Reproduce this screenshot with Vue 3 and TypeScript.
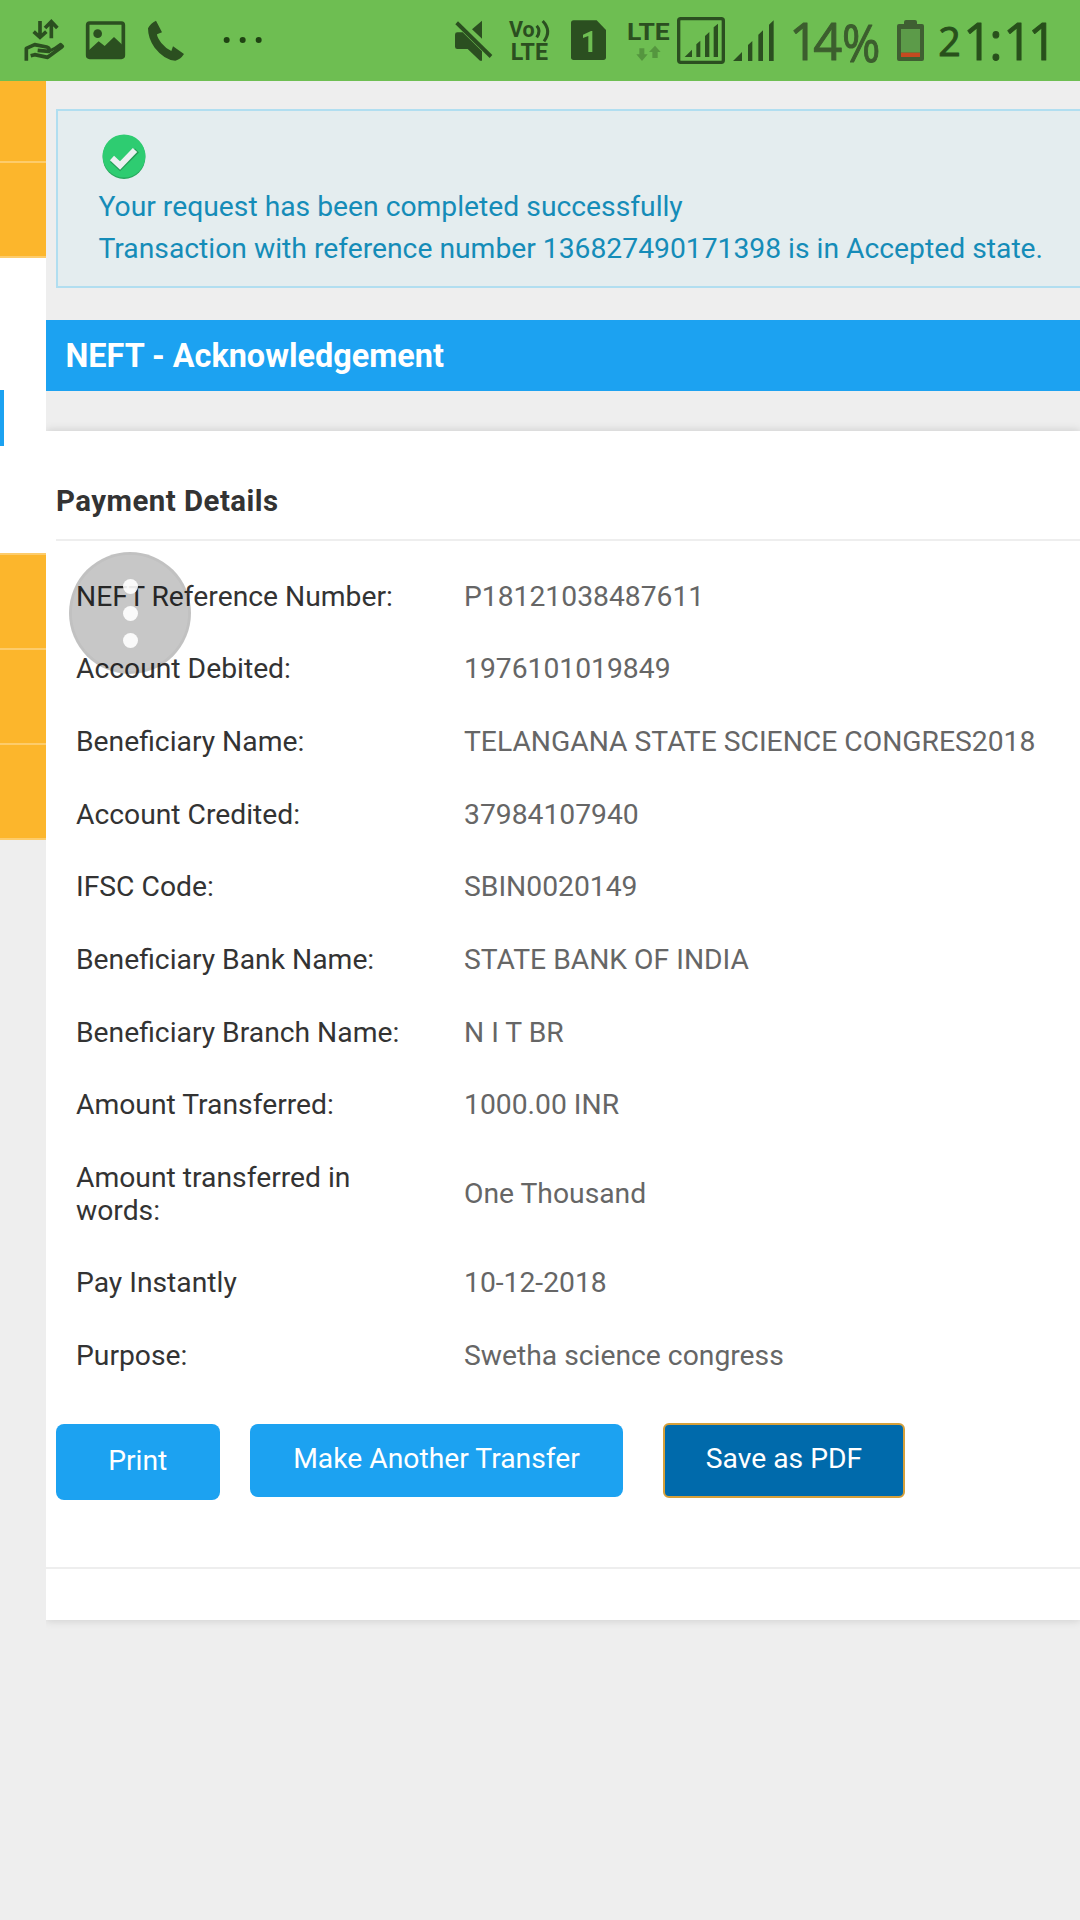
<script setup lang="ts">
interface Detail {
  label: string
  value: string
}

const details: Detail[] = [
  { label: 'NEFT Reference Number:', value: 'P18121038487611' },
  { label: 'Account Debited:', value: '1976101019849' },
  { label: 'Beneficiary Name:', value: 'TELANGANA STATE SCIENCE CONGRES2018' },
  { label: 'Account Credited:', value: '37984107940' },
  { label: 'IFSC Code:', value: 'SBIN0020149' },
  { label: 'Beneficiary Bank Name:', value: 'STATE BANK OF INDIA' },
  { label: 'Beneficiary Branch Name:', value: 'N I T BR' },
  { label: 'Amount Transferred:', value: '1000.00 INR' },
  { label: 'Amount transferred in words:', value: 'One Thousand' },
  { label: 'Pay Instantly', value: '10-12-2018' },
  { label: 'Purpose:', value: 'Swetha science congress' },
]
</script>

<template>
  <div class="screen">
    <header class="status">
      <!-- data sharing hand -->
      <svg width="75" height="81" viewBox="0 0 225 243">
        <g fill="none" stroke="#2b4f20" stroke-width="11">
          <path d="M120 63V110M101 95L120 112L139 95" />
          <path d="M154 115V66M135 84L154 65L172 84" />
          <path d="M79 182V145L104 134L140 141Q151 144 146 154L113 151" stroke-linejoin="round" />
          <path d="M92 167L104 164L143 172L186 140" stroke-linejoin="round" />
          <path d="M148 153L163 146L182 133L188 139" stroke-width="9" stroke-linecap="round" stroke-linejoin="round" />
        </g>
      </svg>
      <!-- picture -->
      <svg width="61" height="81" viewBox="225 0 183 243">
        <rect x="263" y="69" width="107" height="103" rx="6" fill="none" stroke="#2b4f20" stroke-width="11" />
        <circle cx="293" cy="101" r="13" fill="#2b4f20" />
        <path d="M264 153L296 124L314 138L342 111L370 137V172H264Z" fill="#2b4f20" />
      </svg>
      <!-- phone -->
      <svg width="64" height="81" viewBox="408 0 192 243">
        <path d="M468 62L486 97L471 103Q471 112 484 129Q498 146 514 153L519 139L552 162Q541 179 526 182Q493 180 464 143Q444 116 444 85Q451 70 468 62Z" fill="#2b4f20" />
      </svg>
      <!-- more notifications -->
      <svg width="240" height="81" viewBox="600 0 720 243">
        <g fill="#1f4312">
          <circle cx="680" cy="120" r="9" />
          <circle cx="728" cy="120" r="9" />
          <circle cx="776" cy="120" r="9" />
        </g>
      </svg>
      <!-- muted -->
      <svg width="60" height="81" viewBox="30 0 180 243">
        <g fill="#2b4f20">
          <path d="M126 88L156 62V116Z" />
          <path d="M82 97H98L156 154V182H150L113 147H82Q75 147 75 140V104Q75 97 82 97Z" />
          <path d="M84 64L187 165L179 174L76 73Z" />
        </g>
      </svg>
      <!-- VoLTE -->
      <svg width="60" height="81" viewBox="210 0 180 243">
        <g class="glyph" font-size="66">
          <text x="237" y="112" textLength="77" lengthAdjust="spacingAndGlyphs">Vo</text>
          <text x="242" y="180" font-size="70" textLength="112" lengthAdjust="spacingAndGlyphs">LTE</text>
        </g>
        <path d="M320 77Q334 92 320 112M338 63Q366 92 342 124" fill="none" stroke="#2b4f20" stroke-width="9" />
      </svg>
      <!-- SIM 1 -->
      <svg width="56" height="81" viewBox="390 0 168 243">
        <path d="M431 61H500L528 90V172Q528 180 520 180H431Q423 180 423 172V69Q423 61 431 61Z" fill="#2b4f20" />
        <path d="M459 104L483 93H487V156H475V108L459 114Z" fill="#6ebe52" />
      </svg>
      <!-- LTE data -->
      <svg width="57" height="81" viewBox="558 0 171 243">
        <text class="glyph" x="591" y="120" font-size="74" textLength="128" lengthAdjust="spacingAndGlyphs">LTE</text>
        <path d="M628 145H643V163H653L636 183L619 163H628ZM667 174V156H657L675 137L692 156H683V174Z" fill="#55963f" />
      </svg>
      <!-- signal, data SIM -->
      <svg width="55" height="81" viewBox="729 0 165 243">
        <rect x="746" y="56" width="134" height="131" rx="6" fill="none" stroke="#2b4f20" stroke-width="10" />
        <path d="M764 171L786 149V171ZM799 171V133L811 122V171ZM825 171V108L838 96V171ZM851 171V82L864 71V171Z" fill="#2b4f20" />
      </svg>
      <!-- signal, second SIM -->
      <svg width="54" height="81" viewBox="894 0 162 243">
        <path d="M909 183L936 156V183ZM954 183V135L967 123V183ZM985 183V104L999 91V183ZM1017 183V74L1031 61V183Z" fill="#2b4f20" />
      </svg>
      <svg width="106" height="81" viewBox="66 0 318 243">
        <g class="hand" fill="#3c5e2e" stroke="#3c5e2e">
          <text y="181" x="88 160" font-size="152">14</text>
          <text x="246" y="186" font-size="156" textLength="115" lengthAdjust="spacingAndGlyphs">%</text>
        </g>
      </svg>
      <!-- battery -->
      <svg width="42" height="81" viewBox="384 0 126 243">
        <path d="M432 72V66Q432 60 438 60H465Q471 60 471 66V72H486Q492 72 492 78V177Q492 183 486 183H417Q411 183 411 177V78Q411 72 417 72Z" fill="#3f5f32" />
        <path d="M423 87H480V158H423Z" fill="#5c9b49" />
        <path d="M423 158H480V171H423Z" fill="#c54a20" />
      </svg>
      <svg width="150" height="81" viewBox="510 0 450 243">
        <text class="hand" fill="#28501b" stroke="#28501b" x="535 610 688 730 804" y="168 181 181 181 181" font-size="152"><tspan font-size="118">2</tspan>1:11</text>
      </svg>
    </header>

    <div class="body">
      <aside class="side">
        <div class="tile t1"></div>
        <div class="tile t2"></div>
        <div class="blank"><div class="marker"></div></div>
        <div class="tile t3"></div>
        <div class="tile t4"></div>
        <div class="tile t4"></div>
      </aside>

      <main class="content">
        <section class="alert">
          <svg class="ok" width="44" height="46" viewBox="0 0 44 46">
            <ellipse cx="22" cy="23" rx="21.4" ry="22" fill="#27a75c" />
            <ellipse cx="22" cy="22" rx="21.4" ry="21.6" fill="#2ecc71" />
            <path d="M10 26L18 33.5L35 16.5" fill="none" stroke="#259c56" stroke-width="5.5" />
            <path d="M10 24L18 31.5L33 16" fill="none" stroke="#ecf0f1" stroke-width="6" />
          </svg>
          <p>Your request has been completed successfully</p>
          <p>Transaction with reference number 136827490171398 is in Accepted state.</p>
        </section>

        <h1>NEFT - Acknowledgement</h1>

        <section class="panel">
          <h2>Payment Details</h2>
          <dl>
            <div v-for="d in details" :key="d.label" class="row">
              <dt>{{ d.label }}</dt>
              <dd>{{ d.value }}</dd>
            </div>
          </dl>
          <div class="actions">
            <button class="btn print">Print</button>
            <button class="btn again">Make Another Transfer</button>
            <button class="btn save">Save as PDF</button>
          </div>
          <div class="foot"></div>
        </section>
      </main>
    </div>

    <div class="bubble"><i></i><i></i><i></i></div>
  </div>
</template>

<style>
html,
body {
  margin: 0;
  background: #eee;
}
</style>

<style scoped>
.screen {
  position: relative;
  width: 1080px;
  height: 1920px;
  overflow: hidden;
  background: #eee;
  font-family: Roboto, sans-serif;
  font-size: 28.28px;
}
.status {
  display: flex;
  height: 81px;
  background: #6ebe52;
}
.status svg {
  flex: none;
  display: block;
}
.glyph {
  font-family: Roboto, sans-serif;
  font-weight: 700;
  fill: #2b4f20;
}
.hand {
  font-family: 'Open Sans', sans-serif;
  font-weight: 400;
  stroke-width: 3;
  stroke-linejoin: round;
}
.body {
  display: flex;
  align-items: flex-start;
}
.side {
  width: 46px;
  flex: none;
}
.tile {
  box-sizing: border-box;
  background: #fcb62c;
  border-bottom: 2px solid #fdcc6b;
}
.t1 {
  height: 82px;
}
.t2 {
  height: 95px;
}
.t3 {
  height: 97px;
  border-top: 2px solid #fdcc6b;
}
.t4 {
  height: 95px;
}
.blank {
  height: 295px;
  background: #fff;
  padding-top: 132px;
  box-sizing: border-box;
}
.marker {
  width: 4px;
  height: 56px;
  background: #1ca2f1;
}
.content {
  flex: 1;
  min-width: 0;
  overflow: hidden;
  padding-bottom: 20px;
}
.alert {
  box-sizing: border-box;
  height: 179px;
  margin: 28px -4px 0 10px;
  padding: 23px 0 0 40.5px;
  border: 2px solid #b1def0;
  background: #e4edef;
  color: #158cb8;
}
.ok {
  display: block;
  margin: 0 0 0 3px;
}
.alert p {
  margin: 0;
  line-height: 42px;
  white-space: nowrap;
}
.alert p:first-of-type {
  margin-top: 6px;
}
h1 {
  box-sizing: border-box;
  height: 71px;
  margin: 32px 0 0;
  padding-left: 19.5px;
  background: #1ca2f1;
  color: #fff;
  font-size: 32.4px;
  font-weight: 700;
  line-height: 72px;
}
.panel {
  height: 1189px;
  margin-top: 40px;
  background: #fff;
  box-shadow: 0 0 9px rgba(0, 0, 0, 0.16);
}
h2 {
  box-sizing: border-box;
  height: 110px;
  margin: 0 0 0 10px;
  padding-top: 53px;
  border-bottom: 2px solid #eee;
  color: #333;
  font-size: 29.4px;
  font-weight: 700;
  letter-spacing: 0.48px;
  line-height: 34px;
}
dl {
  margin: 0;
  padding: 19.6px 0 0 30px;
}
.row {
  display: flex;
  align-items: center;
  padding: 19.95px 0;
  line-height: 32.8px;
}
dt {
  width: 388px;
  padding-right: 60px;
  box-sizing: border-box;
  color: #333;
}
dd {
  margin: 0;
  color: #666;
  white-space: nowrap;
}
.actions {
  display: flex;
  align-items: flex-start;
  height: 174px;
  padding: 31px 0 0 10px;
  box-sizing: border-box;
}
.btn {
  flex: none;
  height: 73px;
  padding: 0 0 3px;
  border: 0;
  border-radius: 8px;
  background: #1ca2f1;
  color: #fff;
  font: inherit;
}
.print {
  width: 163.5px;
  height: 76.5px;
}
.again {
  width: 373px;
  margin-left: 30.5px;
}
.save {
  width: 240px;
  margin-left: 41px;
  border-radius: 5px;
  background: #006aab;
  outline: 2px solid #d6a03a;
  outline-offset: -1px;
}
.foot {
  height: 2px;
  background: #eee;
}
.bubble {
  position: absolute;
  left: 69px;
  top: 552px;
  width: 122px;
  height: 122px;
  box-sizing: border-box;
  border: 3px solid rgba(0, 0, 0, 0.03);
  border-radius: 50%;
  background: rgba(0, 0, 0, 0.22);
  display: flex;
  flex-direction: column;
  align-items: center;
  justify-content: center;
  gap: 12px;
}
.bubble i {
  width: 15px;
  height: 15px;
  border-radius: 50%;
  background: rgba(255, 255, 255, 0.9);
}
</style>
